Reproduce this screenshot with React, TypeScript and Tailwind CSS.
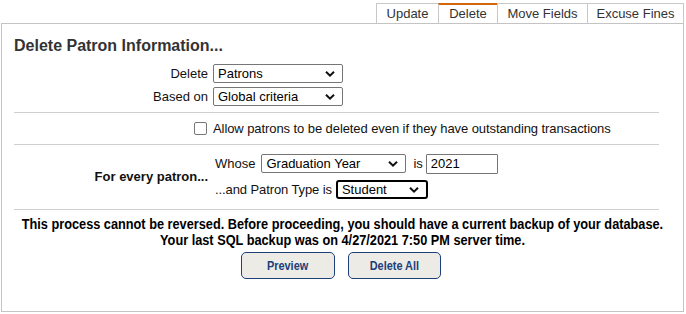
import React from 'react';

const Chevron: React.FC = () => (
  <svg width="10" height="7" viewBox="0 0 10 7" className="absolute right-[7px] top-1/2 -translate-y-1/2">
    <path d="M1 1.2 L5 5.2 L9 1.2" fill="none" stroke="#111" strokeWidth="2" />
  </svg>
);

const FakeSelect: React.FC<{ value: string; width: string; focused?: boolean }> = ({ value, width, focused }) => (
  <div
    className={
      'relative h-[19px] bg-white flex items-center pl-[4px] text-[13px] text-black ' +
      width +
      (focused ? ' border-2 border-black rounded-[3px] pl-[3px]' : ' border border-[#767676] rounded-[2px]')
    }
  >
    {value}
    <Chevron />
  </div>
);

const tabs = ['Update', 'Delete', 'Move Fields', 'Excuse Fines'];

const App: React.FC = () => {
  return (
    <div className="w-[686px] h-[314px] bg-white overflow-hidden text-[13px] text-[#111]" style={{ fontFamily: '"Liberation Sans", Arial, sans-serif' }}>
      {/* tabs */}
      <div className="flex justify-end pt-[3px] pr-[2px] h-[23px]">
        {tabs.map((t) => (
          <div
            key={t}
            className={
              'h-[20px] flex items-center justify-center text-[13px] text-[#333] border-l border-[#c8c8c8] last:border-r ' +
              (t === 'Delete' ? 'border-t-[2px] border-t-[#d4670e] ' : 'border-t border-t-[#c8c8c8] ') +
              (t === 'Update' ? 'w-[62px]' : t === 'Delete' ? 'w-[59px]' : t === 'Move Fields' ? 'w-[90px]' : 'w-[97px]')
            }
          >
            {t}
          </div>
        ))}
      </div>

      {/* panel */}
      <div className="ml-[1px] w-[683px] h-[289px] border border-[#c4c4c4] pl-[12px] pr-[24px] pt-[12px]">
        <h2 className="text-[16px] font-bold text-[#333] leading-[20px]">Delete Patron Information...</h2>

        <div className="mt-[8px] flex flex-col gap-[4px]">
          <div className="flex items-center h-[19px]">
            <div className="w-[194px] text-right">Delete</div>
            <div className="ml-[5px]">
              <FakeSelect value="Patrons" width="w-[130px]" />
            </div>
          </div>
          <div className="flex items-center h-[19px]">
            <div className="w-[194px] text-right">Based on</div>
            <div className="ml-[5px]">
              <FakeSelect value="Global criteria" width="w-[130px]" />
            </div>
          </div>
        </div>

        <div className="mt-[6px] border-t border-[#cfcfcf]" />

        <div className="h-[31px] flex items-center">
          <div className="w-[193px] flex justify-end">
            <span className="block w-[13px] h-[13px] border border-[#767676] rounded-[2px] bg-white" />
          </div>
          <div className="ml-[6px] tracking-[-0.08px]">Allow patrons to be deleted even if they have outstanding transactions</div>
        </div>

        <div className="border-t border-[#cfcfcf]" />

        <div className="flex items-center pt-[9px] pb-[10px]">
          <div className="w-[194px] text-right font-bold">For every patron...</div>
          <div className="ml-[7px] flex flex-col gap-[7px]">
            <div className="flex items-center h-[19px]">
              <span>Whose</span>
              <div className="ml-[6px]">
                <FakeSelect value="Graduation Year" width="w-[145px]" />
              </div>
              <span className="ml-[7px]">is</span>
              <div className="ml-[3px] w-[72px] h-[20px] border border-[#767676] rounded-[1px] flex items-center pl-[4px] text-black">2021</div>
            </div>
            <div className="flex items-center h-[19px]">
              <span className="tracking-[-0.1px]">...and Patron Type is</span>
              <div className="ml-[4px]">
                <FakeSelect value="Student" width="w-[92px]" focused />
              </div>
            </div>
          </div>
        </div>

        <div className="border-t border-[#cfcfcf]" />

        <div className="pt-[6px] pl-[12px] flex flex-col items-center font-bold text-black text-[14px] leading-[16px]">
          <p className="whitespace-nowrap scale-x-[0.91]">
            This process cannot be reversed. Before proceeding, you should have a current backup of your database.
          </p>
          <p className="whitespace-nowrap scale-x-[0.91]">Your last SQL backup was on 4/27/2021 7:50 PM server time.</p>
        </div>

        <div className="mt-[4px] flex justify-center gap-[13px] pl-[9px]">
          <button className="w-[94px] h-[27px] rounded-[5px] border border-[#1d3f7a] bg-[#ecebe6] text-[#1d3f7a] font-bold text-[13px]">
            <span className="inline-block scale-x-[0.84]">Preview</span>
          </button>
          <button className="w-[93px] h-[27px] rounded-[5px] border border-[#1d3f7a] bg-[#ecebe6] text-[#1d3f7a] font-bold text-[13px]">
            <span className="inline-block scale-x-[0.84]">Delete All</span>
          </button>
        </div>
      </div>
    </div>
  );
};

export default App;
